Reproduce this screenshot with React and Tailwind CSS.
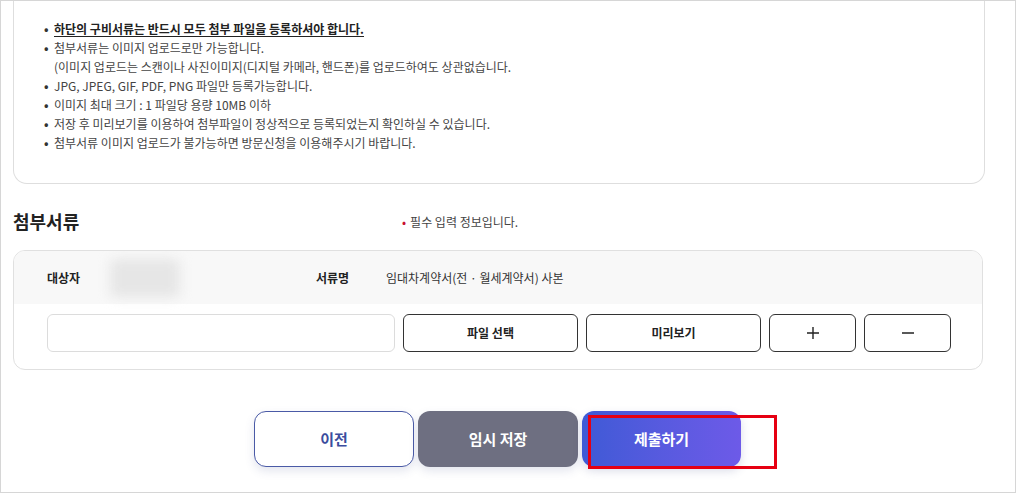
import React from "react";

const notices = [
  { text: "하단의 구비서류는 반드시 모두 첨부 파일을 등록하셔야 합니다.", strong: true },
  { text: "첨부서류는 이미지 업로드로만 가능합니다." },
  { text: "(이미지 업로드는 스캔이나 사진이미지(디지털 카메라, 핸드폰)를 업로드하여도 상관없습니다.", noBullet: true },
  { text: "JPG, JPEG, GIF, PDF, PNG 파일만 등록가능합니다." },
  { text: "이미지 최대 크기 : 1 파일당 용량 10MB 이하" },
  { text: "저장 후 미리보기를 이용하여 첨부파일이 정상적으로 등록되었는지 확인하실 수 있습니다." },
  { text: "첨부서류 이미지 업로드가 불가능하면 방문신청을 이용해주시기 바랍니다." },
];

const font = { fontFamily: '"Noto Sans CJK KR", "Noto Sans", sans-serif' };

const App = () => {
  return (
    <div
      className="w-[1016px] h-[493px] border border-[#d6d6d6] bg-white overflow-hidden relative"
      style={font}
    >
      <div className="pl-[12px] pr-[30px]">
        {/* Notice box */}
        <div className="border border-t-0 border-[#dedede] rounded-b-[14px] pt-[18px] pb-[31px] pl-[30px]">
          <ul className="text-[12px] leading-[19px] text-[#444]">
            {notices.map((n, i) => (
              <li key={i} className="flex">
                <span className="w-[10px] shrink-0 font-bold text-[#333]">{n.noBullet ? "" : "•"}</span>
                <span
                  className={
                    n.strong ? "font-bold text-[#222] underline underline-offset-2" : ""
                  }
                >
                  {n.text}
                </span>
              </li>
            ))}
          </ul>
        </div>

        {/* Heading */}
        <div className="flex items-center mt-[25px]">
          <h2 className="w-[389px] text-[18px] leading-[24px] font-bold text-[#222]">
            첨부서류
          </h2>
          <p className="text-[12px] text-[#444] pt-[2px]">
            <span className="text-[#c8102e] mr-[4px]">•</span>필수 입력 정보입니다.
          </p>
        </div>

        {/* Attachment table */}
        <div className="mt-[17px] mr-[2px] border border-[#e0e0e0] rounded-[12px] overflow-hidden">
          <div className="flex items-center h-[53px] bg-[#f8f8f8] pl-[33px] text-[12px] text-[#222]">
            <span className="w-[63px] font-bold">대상자</span>
            <span className="w-[70px] h-[38px] bg-[#e6e6e6] blur-[6px] rounded-md" />
            <span className="ml-[136px] w-[70px] font-bold">서류명</span>
            <span className="text-[#333]">임대차계약서(전 · 월세계약서) 사본</span>
          </div>
          <div className="flex items-center gap-[8px] pl-[33px] pt-[10px] pb-[17px]">
            <input
              className="w-[348px] h-[38px] border border-[#dcdcdc] rounded-[6px] outline-none"
              type="text"
            />
            <button className="w-[175px] h-[38px] border border-[#333] rounded-[6px] text-[12px] font-bold text-[#222]">
              파일 선택
            </button>
            <button className="w-[175px] h-[38px] border border-[#333] rounded-[6px] text-[12px] font-bold text-[#222]">
              미리보기
            </button>
            <button className="w-[87px] h-[38px] border border-[#333] rounded-[6px] flex items-center justify-center text-[#222]">
              <svg width="14" height="14" viewBox="0 0 14 14">
                <path d="M7 1v12M1 7h12" stroke="currentColor" strokeWidth="1.4" />
              </svg>
            </button>
            <button className="w-[87px] h-[38px] border border-[#333] rounded-[6px] flex items-center justify-center text-[#222]">
              <svg width="14" height="14" viewBox="0 0 14 14">
                <path d="M1 7h12" stroke="currentColor" strokeWidth="1.4" />
              </svg>
            </button>
          </div>
        </div>

        {/* Action buttons */}
        <div className="flex gap-[4px] mt-[41px] pl-[241px]">
          <button className="w-[160px] h-[56px] rounded-[12px] border border-[#4a5aa6] bg-white text-[#3b4d9e] text-[15px] font-bold shadow-[0_4px_10px_rgba(70,80,140,0.15)]">
            이전
          </button>
          <button className="w-[160px] h-[56px] rounded-[12px] bg-[#6e6f81] text-white text-[15px] font-bold shadow-[0_4px_10px_rgba(70,80,140,0.15)]">
            임시 저장
          </button>
          <button className="w-[159px] h-[56px] rounded-[12px] bg-gradient-to-r from-[#3e5ad6] to-[#6d5ae8] text-white text-[15px] font-bold shadow-[0_4px_10px_rgba(70,80,140,0.2)]">
            제출하기
          </button>
        </div>
      </div>

      {/* annotation highlight */}
      <div className="absolute left-[587px] top-[414px] w-[189px] h-[54px] border-[3px] border-[#e60012]" />
    </div>
  );
};

export default App;
